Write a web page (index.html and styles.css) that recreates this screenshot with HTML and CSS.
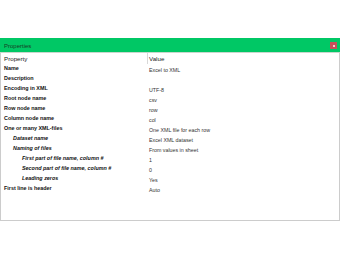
FILE: index.html
```html
<!DOCTYPE html>
<html>
<head>
<meta charset="utf-8">
<link rel="stylesheet" href="styles.css">
</head>
<body>
<div class="page">
  <div class="panel">
    <div class="titlebar">
      <span class="title">Properties</span>
      <span class="close"><span class="close-mark"></span></span>
    </div>
    <div class="grid">
      <div class="head-label">Property</div><div class="head-value">Value</div>
      <div class="label">Name</div><div class="value">Excel to XML</div>
      <div class="label">Description</div><div class="value"></div>
      <div class="label">Encoding in XML</div><div class="value">UTF-8</div>
      <div class="label">Root node name</div><div class="value">csv</div>
      <div class="label">Row node name</div><div class="value">row</div>
      <div class="label">Column node name</div><div class="value">col</div>
      <div class="label">One or many XML-files</div><div class="value">One XML file for each row</div>
      <div class="label sub1">Dataset name</div><div class="value">Excel XML dataset</div>
      <div class="label sub1">Naming of files</div><div class="value">From values in sheet</div>
      <div class="label sub2">First part of file name, column #</div><div class="value">1</div>
      <div class="label sub2">Second part of file name, column #</div><div class="value">0</div>
      <div class="label sub2">Leading zeros</div><div class="value">Yes</div>
      <div class="label">First line is header</div><div class="value">Auto</div>
    </div>
  </div>
</div>
</body>
</html>
```
FILE: styles.css
```css
html, body {
  margin: 0;
  padding: 0;
  background: #ffffff;
}
.page {
  width: 340px;
  height: 260px;
  padding-top: 38px;
  box-sizing: border-box;
  font-family: "Liberation Sans", Arial, sans-serif;
}
.panel {
  width: 340px;
  height: 183px;
  box-sizing: border-box;
  border: 1px solid #cccccc;
  border-top: none;
  display: flex;
  flex-direction: column;
}
.titlebar {
  height: 14px;
  background: #00c865;
  border-bottom: 1px solid #c9d6cd;
  margin: 0 -1px;
  display: flex;
  align-items: center;
  justify-content: space-between;
  padding: 0 3px 0 4px;
}
.title {
  font-size: 6px;
  color: #1a3a26;
  line-height: 14px;
  padding-top: 1px;
}
.close {
  width: 7px;
  height: 7px;
  background: #c8505a;
  display: flex;
  align-items: center;
  justify-content: center;
  margin-top: 1px;
}
.close-mark {
  width: 2px;
  height: 2px;
  background: #f4c9cc;
}
.grid {
  display: grid;
  grid-template-columns: 144px 1fr;
  grid-auto-rows: 10px;
  padding-left: 2px;
}
.head-label, .head-value {
  font-size: 6.2px;
  color: #222;
  line-height: 10px;
  height: 10px;
  padding-top: 1px;
}
.head-label {
  padding-left: 1px;
}
.head-value {
  border-left: 1px solid #d8d8d8;
  padding-left: 1px;
}
.label {
  font-size: 5.4px;
  font-weight: bold;
  color: #111;
  line-height: 10px;
  padding-left: 1px;
  white-space: nowrap;
}
.sub1 {
  padding-left: 10px;
  font-style: italic;
}
.sub2 {
  padding-left: 19px;
  font-style: italic;
}
.value {
  font-size: 5.3px;
  color: #333;
  line-height: 10px;
  padding-top: 2px;
  padding-left: 2px;
  white-space: nowrap;
}
```
